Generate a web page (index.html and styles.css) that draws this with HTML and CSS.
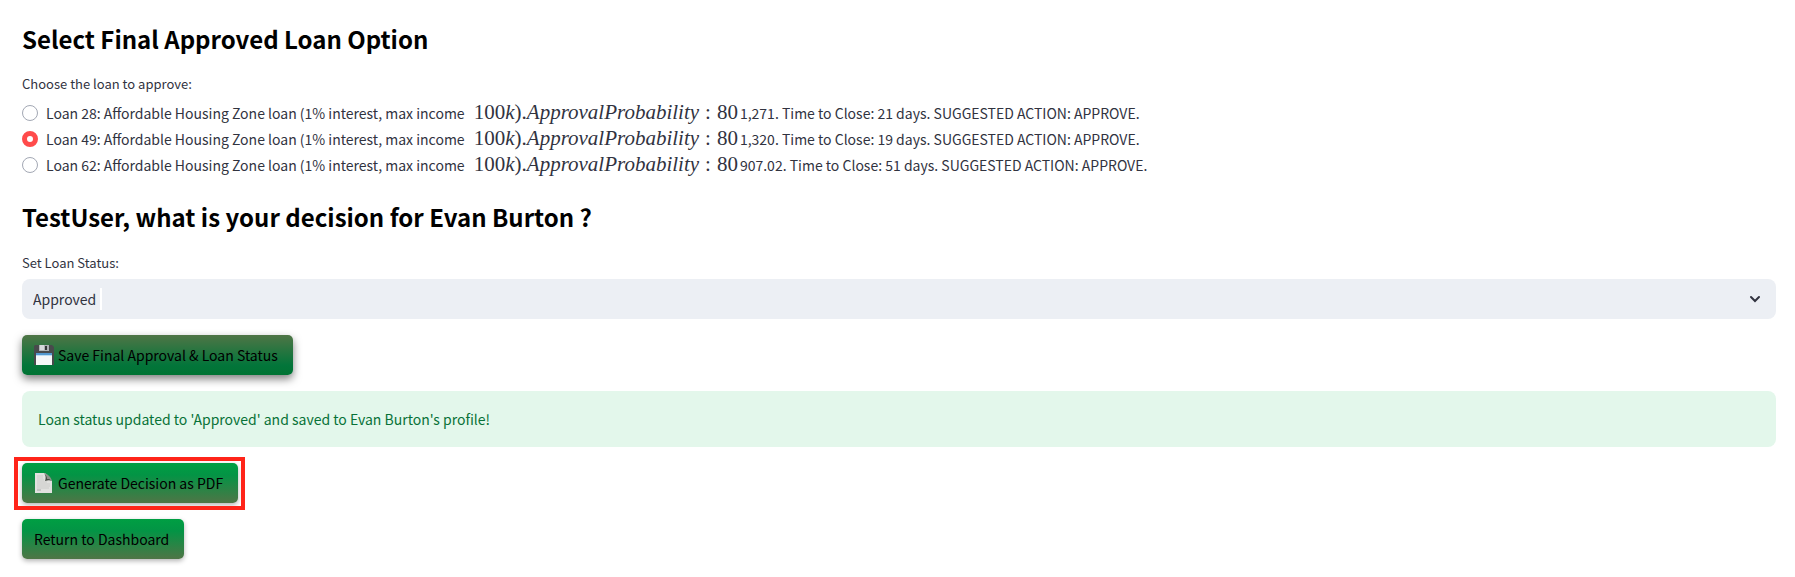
FILE: index.html
```html
<!DOCTYPE html>
<html lang="en">
<head>
<meta charset="utf-8">
<meta name="viewport" content="width=device-width, initial-scale=1">
<title>Loan Decision</title>
<link rel="stylesheet" href="styles.css">
</head>
<body>
<main class="page">
  <h2 class="heading">Select Final Approved Loan Option</h2>
  <fieldset class="options">
    <legend class="label">Choose the loan to approve:</legend>
    <label class="option"><input class="radio" type="radio" name="loan"><span class="option-text">Loan 28: Affordable Housing Zone loan (1% interest, max income <span class="math"><span class="num">100</span><i class="word">k</i><span class="num">).</span><i class="word">ApprovalProbability</i><span class="colon">:</span><span class="num">80</span></span>1,271. Time to Close: 21 days. SUGGESTED ACTION: APPROVE.</span></label>
    <label class="option"><input class="radio" type="radio" name="loan" checked><span class="option-text">Loan 49: Affordable Housing Zone loan (1% interest, max income <span class="math"><span class="num">100</span><i class="word">k</i><span class="num">).</span><i class="word">ApprovalProbability</i><span class="colon">:</span><span class="num">80</span></span>1,320. Time to Close: 19 days. SUGGESTED ACTION: APPROVE.</span></label>
    <label class="option"><input class="radio" type="radio" name="loan"><span class="option-text">Loan 62: Affordable Housing Zone loan (1% interest, max income <span class="math"><span class="num">100</span><i class="word">k</i><span class="num">).</span><i class="word">ApprovalProbability</i><span class="colon">:</span><span class="num">80</span></span>907.02. Time to Close: 51 days. SUGGESTED ACTION: APPROVE.</span></label>
  </fieldset>
  <h2 class="heading">TestUser, what is your decision for Evan Burton ?</h2>
  <div class="field">
    <label class="label" for="status">Set Loan Status:</label>
    <div class="select-wrap">
      <select class="select" id="status"><option>Approved</option></select>
      <span class="caret"></span>
      <svg class="chevron" viewBox="0 0 12 8" aria-hidden="true"><path d="M2 2l4 4 4-4" fill="none" stroke="#31333f" stroke-width="2" stroke-linecap="round"/></svg>
    </div>
  </div>
  <div class="actions">
    <button class="button button-active" type="button">
      <svg class="icon" viewBox="0 0 20 20" aria-hidden="true">
        <path d="M1 0h17l2 2v18H0V1z" fill="#484a4c"/>
        <path d="M5 0h10v6H5z" fill="#aeb2b4"/>
        <path d="M6 0h4v5H6z" fill="#d7dadb"/>
        <path d="M11 1h2v4h-2z" fill="#36383a"/>
        <path d="M2 8h16v12H2z" fill="#f5f7f8"/>
        <path d="M2 8h16v2H2z" fill="#5398cf"/>
        <path d="M2 10h16v1H2z" fill="#bdddf2"/>
      </svg>
      Save Final Approval &amp; Loan Status
    </button>
    <div class="alert" role="status">Loan status updated to 'Approved' and saved to Evan Burton's profile!</div>
    <div class="highlight">
      <button class="button" type="button">
        <svg class="icon" viewBox="0 0 20 20" aria-hidden="true">
          <path d="M1 0h10l7 8v12H1z" fill="#e1e1df"/>
          <path d="M10 0c2 3 2 5 1 8 3-1 5-1 7 0z" fill="#454b44"/>
          <path d="M10 0c4 1 7 4 8 8-2-2-3-2-5-2 0-2-1-4-3-6z" fill="#8d918a"/>
          <path d="M3 3h6M3 5h6M3 7h7M3 9h10M3 11h13M3 13h13M3 15h12" stroke="#cbcbc9" stroke-width="1"/>
          <path d="M3 17h4" stroke="#aaa" stroke-width="1"/>
        </svg>
        Generate Decision as PDF
      </button>
    </div>
    <button class="button" type="button">Return to Dashboard</button>
  </div>
</main>
</body>
</html>
```
FILE: styles.css
```css
* { box-sizing: border-box; }

body {
  margin: 0;
  background: #fff;
  color: #31333f;
  font: 14px/26px "Noto Sans CJK SC", "Noto Sans", sans-serif;
}

.page { padding: 20px 19px 18px 22px; }

.heading {
  margin: 0;
  color: #000;
  font-size: 24px;
  font-weight: 700;
  line-height: 38px;
}

.options {
  margin: 16px 0 20px;
  padding: 0;
  border: 0;
}

.label {
  display: block;
  padding: 0;
  font-size: 13px;
  line-height: 20px;
}

.options .label { margin-bottom: 6px; }

.option {
  display: flex;
  align-items: center;
  gap: 8px;
  height: 26px;
}

.radio {
  flex: none;
  appearance: none;
  width: 16px;
  height: 16px;
  margin: 0;
  border: 1px solid #a3a8b4;
  border-radius: 50%;
  background: #fff;
}

.radio:checked { border: 5px solid #ff4b4b; }

.option-text { white-space: nowrap; }

.math {
  margin: 0 2px 0 6px;
  font-family: "Liberation Serif", serif;
  font-size: 21px;
  line-height: 20px;
}

.colon { margin: 0 6px; }

.field { margin-top: 17px; }

.select-wrap {
  position: relative;
  margin-top: 6px;
}

.select {
  display: block;
  appearance: none;
  width: 100%;
  height: 40px;
  padding: 0 40px 0 11px;
  border: 0;
  border-radius: 8px;
  background: #eceff4;
  color: #31333f;
  font: inherit;
}

.caret {
  position: absolute;
  top: 9px;
  left: 78px;
  width: 2px;
  height: 22px;
  background: #fff;
}

.chevron {
  position: absolute;
  top: 16px;
  right: 15px;
  width: 12px;
  height: 8px;
}

.actions {
  display: flex;
  flex-direction: column;
  align-items: flex-start;
  gap: 16px;
  margin-top: 16px;
}

.button {
  display: flex;
  align-items: center;
  gap: 4px;
  height: 40px;
  padding: 0 15px 0 12px;
  border: 0;
  border-radius: 5px;
  background: linear-gradient(#009f43 0%, #039445 30%, #4f7546 100%);
  box-shadow: 0 2px 5px rgba(0, 0, 0, 0.3);
  color: #000;
  font: inherit;
  white-space: nowrap;
}

.button-active {
  background: linear-gradient(#4f7546 0%, #03753a 75%, #007333 100%);
  box-shadow: 0 4px 8px rgba(0, 0, 0, 0.5);
}

.icon { width: 20px; height: 20px; }

.alert {
  width: 100%;
  padding: 15px 16px;
  border-radius: 8px;
  background: #e3f7eb;
  color: #087238;
}

.highlight {
  position: relative;
}

.highlight::after {
  content: "";
  position: absolute;
  inset: -6px -7px -7px -8px;
  border: 4px solid #ff2419;
  pointer-events: none;
}
```
